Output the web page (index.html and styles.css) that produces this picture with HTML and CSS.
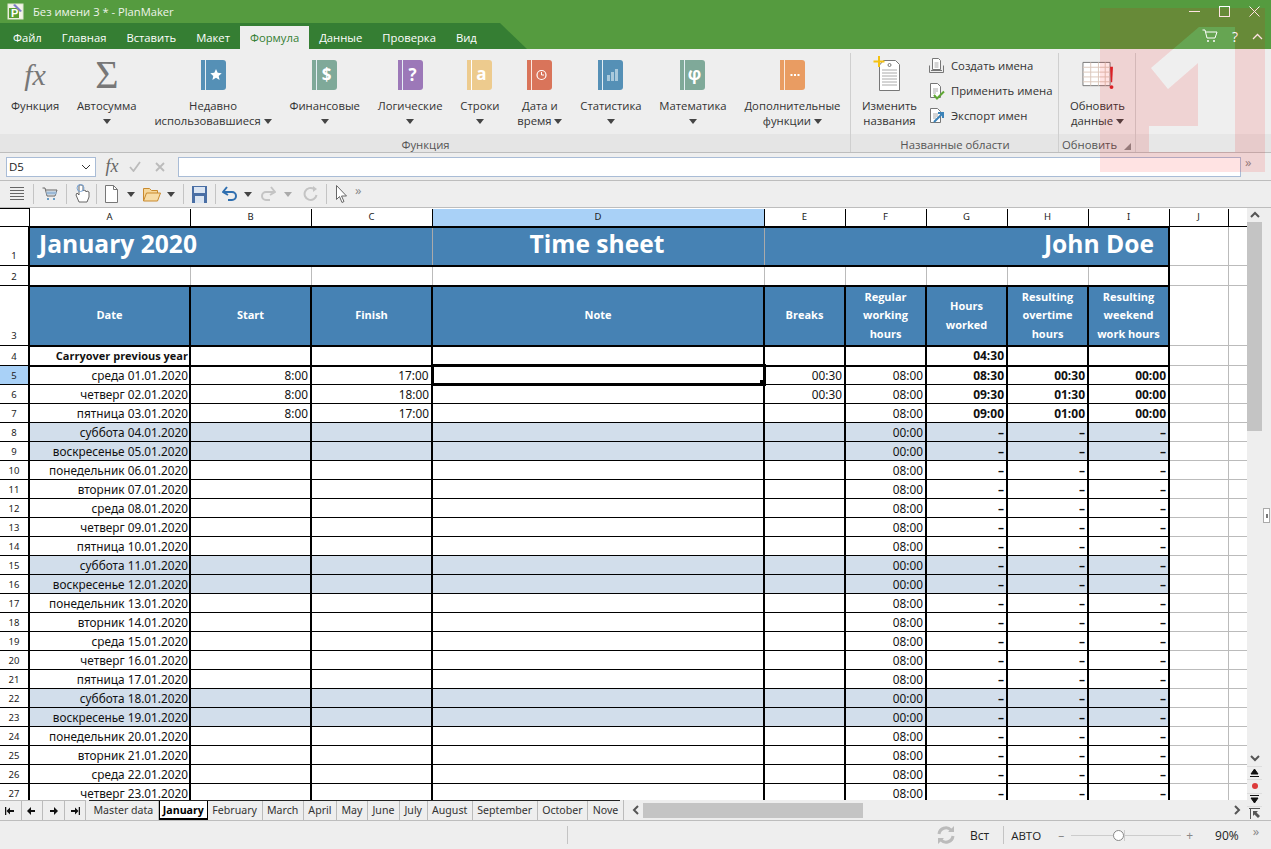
FILE: index.html
```html
<!DOCTYPE html>
<html lang="ru">
<head>
<meta charset="utf-8">
<title>Без имени 3 * - PlanMaker</title>
<link rel="stylesheet" href="styles.css">
</head>
<body>
<div class="app">
  <header class="titlebar">
    <svg class="appicon" width="17" height="17" viewBox="0 0 17 17"><rect x="1" y="1" width="15" height="15" fill="#f4f4e8" stroke="#dfe8d0"/><rect x="2" y="5" width="10" height="10" fill="#5a9e32"/><path d="M8 1l7 7-2 1-7-7z" fill="#7e7ec8"/><text x="4" y="14" class="appicon-p">P</text></svg>
    <span class="title">Без имени 3 * - PlanMaker</span>
    <div class="winctl">
      <svg width="11" height="11" viewBox="0 0 11 11"><path d="M0 5.5h11" stroke="#fff"/></svg>
      <svg width="11" height="11" viewBox="0 0 11 11"><rect x=".5" y=".5" width="10" height="10" fill="none" stroke="#fff"/></svg>
      <svg width="11" height="11" viewBox="0 0 11 11"><path d="M.5.5l10 10M10.5.5l-10 10" stroke="#fff"/></svg>
    </div>
  </header>
  <nav class="menurow">
    <div class="menutabs">
      <span class="mtab">Файл</span><span class="mtab">Главная</span><span class="mtab">Вставить</span><span class="mtab">Макет</span><span class="mtab active">Формула</span><span class="mtab">Данные</span><span class="mtab">Проверка</span><span class="mtab">Вид</span>
    </div>
    <div class="menuicons">
      <svg width="16" height="14" viewBox="0 0 16 14"><path d="M.5 1H3l2 8h8l2-6H4" fill="none" stroke="#fff"/><circle cx="6" cy="12" r="1" fill="#fff"/><circle cx="12" cy="12" r="1" fill="#fff"/></svg>
      <span class="help">?</span>
      <svg width="11" height="7" viewBox="0 0 11 7"><path d="M1 6l4.500-4.500L10 6" fill="none" stroke="#fff" stroke-width="1.300"/></svg>
    </div>
  </nav>
  <section class="ribbon">
    <div class="group g-func">
      <div class="gbody">
        <div class="rbtn"><span class="bigglyph fx">fx</span><span class="rlabel">Функция</span></div>
        <div class="rbtn"><span class="bigglyph sigma">Σ</span><span class="rlabel">Автосумма<br><i class="arrow"></i></span></div>
        <div class="rbtn">
          <svg class="book" viewBox="0 0 25 30"><path class="b-blue" d="M0 0h22a3 3 0 0 1 3 3v24a3 3 0 0 1-3 3H0z"/><rect x="4" width="1" height="30" fill="#e4eef4"/><path d="M15 9l1.700 3.800 4 .4-3 2.700.9 4-3.600-2.100-3.600 2.100.9-4-3-2.700 4-.4z" fill="#fff"/></svg>
          <span class="rlabel">Недавно<br>использовавшиеся <i class="arrow"></i></span>
        </div>
        <div class="rbtn">
          <svg class="book" viewBox="0 0 25 30"><path class="b-green" d="M0 0h22a3 3 0 0 1 3 3v24a3 3 0 0 1-3 3H0z"/><rect x="4" width="1" height="30" fill="#e4eef4"/><text x="14.500" y="21" class="bk">$</text></svg>
          <span class="rlabel">Финансовые<br><i class="arrow"></i></span>
        </div>
        <div class="rbtn">
          <svg class="book" viewBox="0 0 25 30"><path class="b-purple" d="M0 0h22a3 3 0 0 1 3 3v24a3 3 0 0 1-3 3H0z"/><rect x="4" width="1" height="30" fill="#e4eef4"/><text x="14.500" y="21" class="bk">?</text></svg>
          <span class="rlabel">Логические<br><i class="arrow"></i></span>
        </div>
        <div class="rbtn">
          <svg class="book" viewBox="0 0 25 30"><path class="b-tan" d="M0 0h22a3 3 0 0 1 3 3v24a3 3 0 0 1-3 3H0z"/><rect x="4" width="1" height="30" fill="#fff"/><text x="14.500" y="20" class="bk">a</text></svg>
          <span class="rlabel">Строки<br><i class="arrow"></i></span>
        </div>
        <div class="rbtn">
          <svg class="book" viewBox="0 0 25 30"><path class="b-red" d="M0 0h22a3 3 0 0 1 3 3v24a3 3 0 0 1-3 3H0z"/><rect x="4" width="1" height="30" fill="#fbe8e0"/><circle cx="14.500" cy="15" r="4.500" fill="none" stroke="#fff" stroke-width="1.200"/><path d="M14.500 12v3h2.500" fill="none" stroke="#fff"/></svg>
          <span class="rlabel">Дата и<br>время <i class="arrow"></i></span>
        </div>
        <div class="rbtn">
          <svg class="book" viewBox="0 0 25 30"><path class="b-blue" d="M0 0h22a3 3 0 0 1 3 3v24a3 3 0 0 1-3 3H0z"/><rect x="4" width="1" height="30" fill="#e4eef4"/><path d="M9 15h3v6H9zM13 12h3v9h-3zM17 9h3v12h-3z" fill="#a9c9dc"/></svg>
          <span class="rlabel">Статистика<br><i class="arrow"></i></span>
        </div>
        <div class="rbtn">
          <svg class="book" viewBox="0 0 25 30"><path class="b-green" d="M0 0h22a3 3 0 0 1 3 3v24a3 3 0 0 1-3 3H0z"/><rect x="4" width="1" height="30" fill="#e4eef4"/><text x="14.500" y="20" class="bk">φ</text></svg>
          <span class="rlabel">Математика<br><i class="arrow"></i></span>
        </div>
        <div class="rbtn">
          <svg class="book" viewBox="0 0 25 30"><path class="b-orange" d="M0 0h22a3 3 0 0 1 3 3v24a3 3 0 0 1-3 3H0z"/><rect x="4" width="1" height="30" fill="#fbe8da"/><path d="M10.500 14h2v2h-2zM14 14h2v2h-2zM17.500 14h2v2h-2z" fill="#fff"/></svg>
          <span class="rlabel">Дополнительные<br>функции <i class="arrow"></i></span>
        </div>
      </div>
      <div class="glabel">Функция</div>
    </div>
    <div class="group g-names">
      <div class="gbody names">
        <div class="rbtn">
          <svg class="tag" width="32" height="32" viewBox="0 0 32 32"><path d="M10.500 4.500h12l4 4v26h-20V9z" fill="#fff" stroke="#777"/><circle cx="16.500" cy="9" r="1.500" fill="none" stroke="#777"/><path d="M9 14h15M9 17h15M9 20h15M9 23h15M9 26h15M9 29h15" stroke="#aaa"/><path d="M6 0v11M.5 5.500h11" stroke="#f5c211" stroke-width="2"/></svg>
          <span class="rlabel">Изменить<br>названия</span>
        </div>
        <ul class="namelist">
          <li><svg width="17" height="17" viewBox="0 0 17 17"><path d="M4.500 1.500h6l2 2v9h-8z" fill="#fff" stroke="#777"/><path d="M6.500 6h4M6.500 8h4M6.500 10h4" stroke="#aaa"/><path d="M1.500 8.500v7h14v-7M3 13.500h11" fill="none" stroke="#777"/></svg>Создать имена</li>
          <li><svg width="17" height="18" viewBox="0 0 17 18"><path d="M2.500 1.500h7l3 3v11h-10z" fill="#fff" stroke="#777"/><path d="M5 7h5M5 9h5M5 11h3" stroke="#aaa"/><path d="M6 13l3 3.500 7-7" fill="none" stroke="#5fa832" stroke-width="2"/></svg>Применить имена</li>
          <li><svg width="17" height="18" viewBox="0 0 17 18"><path d="M2.500 1.500h7l3 3v11h-10z" fill="#fff" stroke="#777"/><path d="M5 7h5M5 9h5M5 11h3" stroke="#aaa"/><path d="M6 15l8-8M10 6h5v5" fill="none" stroke="#3b82b8" stroke-width="2"/></svg>Экспорт имен</li>
        </ul>
      </div>
      <div class="glabel">Названные области</div>
    </div>
    <div class="group g-refresh">
      <div class="gbody">
        <div class="rbtn">
          <svg width="34" height="31" viewBox="0 0 34 31"><path d="M2.500 2.500h28v24h-28z" fill="#fff" stroke="#777"/><path d="M2.500 7.500h28M2.500 12.500h28M2.500 17.500h28M2.500 22.500h28M10.500 2.500v24M18.500 2.500v24M25.500 2.500v24" stroke="#dcc8bc"/><path d="M30.500 7h3l-.8 16h-1.400z" fill="#d7232a"/><circle cx="32" cy="28" r="2" fill="#d7232a"/></svg>
          <span class="rlabel">Обновить<br>данные <i class="arrow"></i></span>
        </div>
      </div>
      <div class="glabel refresh-label">Обновить<svg width="7" height="7" viewBox="0 0 7 7"><path d="M7 0v7H0z" fill="#8a8a8a"/></svg></div>
    </div>
    <div class="group g-empty"><div class="gbody"></div><div class="glabel">&nbsp;</div></div>
  </section>
  <section class="formulabar">
    <div class="namebox"><span>D5</span><svg width="10" height="6" viewBox="0 0 10 6"><path d="M1 1l4 4 4-4" fill="none" stroke="#333"/></svg></div>
    <span class="ffx">fx</span>
    <svg class="fcheck" width="12" height="11" viewBox="0 0 12 11"><path d="M1 6l3.500 4L11 1" fill="none" stroke="#bbb" stroke-width="1.800"/></svg>
    <svg class="fcross" width="10" height="10" viewBox="0 0 10 10"><path d="M1 1l8 8M9 1L1 9" stroke="#bbb" stroke-width="1.800"/></svg>
    <div class="finput"></div>
    <span class="more">»</span>
  </section>
  <section class="toolbar">
    <svg class="t-menu" width="16" height="16" viewBox="0 0 16 16"><path d="M1 1.500h14M1 4.500h14M1 7.500h14M1 10.500h14M1 13.500h14" stroke="#666"/></svg>
    <i class="sep"></i>
    <svg width="16" height="16" viewBox="0 0 16 16"><path d="M.5 2H3l2 8h8l2-6H4" fill="none" stroke="#666"/><path d="M4.500 7h10" stroke="#9bb9d6" stroke-width="3"/><circle cx="6" cy="13" r="1" fill="#3b82b8"/><circle cx="12" cy="13" r="1" fill="#3b82b8"/></svg>
    <i class="sep"></i>
    <svg class="t-hand" width="15" height="20" viewBox="0 0 15 20"><path d="M4 1v10L2 9 1 11l3 7h8l2-5V8l-2-1-1 1V7L9 6 8 7V1.500L6 1z" fill="#fff" stroke="#666"/><circle cx="5.500" cy="4" r="3.500" fill="none" stroke="#7ba7d8"/></svg>
    <i class="sep"></i>
    <svg width="13" height="18" viewBox="0 0 13 18"><path d="M.5.500h8l4 4v13H.5z" fill="#fff" stroke="#777"/><path d="M8.500.500v4h4" fill="none" stroke="#777"/></svg>
    <i class="arrow dark a-doc"></i>
    <svg class="t-folder" width="18" height="15" viewBox="0 0 18 15"><path d="M.5 14V1.500h6l2 2h6V6" fill="#f6d79a" stroke="#c98a2e"/><path d="M.5 14l3-8h14l-3 8z" fill="#f7dca6" stroke="#c98a2e"/></svg>
    <i class="arrow dark a-folder"></i>
    <i class="sep s-tight"></i>
    <svg width="15" height="17" viewBox="0 0 15 17"><rect width="15" height="17" fill="#4a6fa5"/><rect x="2" y="1" width="11" height="6" fill="#dbe5f2"/><rect x="3" y="10" width="9" height="7" fill="#dbe5f2"/></svg>
    <i class="sep s-undo"></i>
    <svg width="15" height="17" viewBox="0 0 15 17"><path d="M1 6h9a4 4 0 0 1 0 8H6" fill="none" stroke="#2f6fb0" stroke-width="2"/><path d="M5 1L1 6l5 3" fill="none" stroke="#2f6fb0" stroke-width="2"/></svg>
    <i class="arrow dark a-undo"></i>
    <svg class="t-redo" width="15" height="17" viewBox="0 0 15 17"><path d="M14 6H5a4 4 0 0 0 0 8h4" fill="none" stroke="#c4c4c4" stroke-width="2"/><path d="M10 1l4 5-5 3" fill="none" stroke="#c4c4c4" stroke-width="2"/></svg>
    <i class="arrow lite"></i>
    <svg class="t-again" width="16" height="16" viewBox="0 0 16 16"><path d="M13.500 9A6 6 0 1 1 11 3" fill="none" stroke="#c4c4c4" stroke-width="2"/><path d="M10 0l4 3-4 3z" fill="#c4c4c4"/></svg>
    <i class="sep s-cursor"></i>
    <svg width="11" height="18" viewBox="0 0 11 18"><path d="M.5.500v14l3-3 2.500 6 2-1-2.500-5.500h5z" fill="#fff" stroke="#666"/></svg>
    <span class="more tmore">»</span>
  </section>
  <main class="workarea">
    <div class="leftpane">
      <div class="sheet">
        <table class="grid">
          <colgroup><col class="c-rh"><col class="c-a"><col class="c-b"><col class="c-b"><col class="c-d"><col class="c-e"><col class="c-e"><col class="c-e"><col class="c-e"><col class="c-e"><col class="c-j"><col class="c-k"></colgroup>
          <tr class="r-head"><th class="rh"></th><th class="ch">A</th><th class="ch">B</th><th class="ch">C</th><th class="ch on">D</th><th class="ch">E</th><th class="ch">F</th><th class="ch">G</th><th class="ch">H</th><th class="ch">I</th><th class="ch">J</th><th class="ch"></th></tr>
          <tr class="r1"><th class="rh">1</th><td colspan="3" class="big left">January 2020</td><td class="big mid">Time sheet</td><td colspan="5" class="big right">John Doe</td><td class="blank"></td><td class="blank"></td></tr>
          <tr class="r2"><th class="rh">2</th><td class="gap"></td><td class="gap"></td><td class="gap"></td><td class="gap"></td><td class="gap"></td><td class="gap"></td><td class="gap"></td><td class="gap"></td><td class="gap"></td><td class="blank"></td><td class="blank"></td></tr>
          <tr class="r3"><th class="rh">3</th><td class="hd">Date</td><td class="hd">Start</td><td class="hd">Finish</td><td class="hd">Note</td><td class="hd">Breaks</td><td class="hd">Regular<br>working<br>hours</td><td class="hd">Hours<br>worked</td><td class="hd">Resulting<br>overtime<br>hours</td><td class="hd">Resulting<br>weekend<br>work hours</td><td class="blank"></td><td class="blank"></td></tr>
          <tr class="r4"><th class="rh">4</th><td class="b carry">Carryover previous year</td><td></td><td></td><td></td><td></td><td></td><td class="b">04:30</td><td></td><td></td><td class="blank"></td><td class="blank"></td></tr>
          <tr><th class="rh on">5</th><td>среда 01.01.2020</td><td>8:00</td><td>17:00</td><td class="sel"><i class="handle"></i></td><td>00:30</td><td>08:00</td><td class="b">08:30</td><td class="b">00:30</td><td class="b">00:00</td><td class="blank"></td><td class="blank"></td></tr>
          <tr><th class="rh">6</th><td>четверг 02.01.2020</td><td>8:00</td><td>18:00</td><td></td><td>00:30</td><td>08:00</td><td class="b">09:30</td><td class="b">01:30</td><td class="b">00:00</td><td class="blank"></td><td class="blank"></td></tr>
          <tr><th class="rh">7</th><td>пятница 03.01.2020</td><td>8:00</td><td>17:00</td><td></td><td></td><td>08:00</td><td class="b">09:00</td><td class="b">01:00</td><td class="b">00:00</td><td class="blank"></td><td class="blank"></td></tr>
          <tr class="we"><th class="rh">8</th><td>суббота 04.01.2020</td><td></td><td></td><td></td><td></td><td>00:00</td><td class="b">–</td><td class="b">–</td><td class="b">–</td><td class="blank"></td><td class="blank"></td></tr>
          <tr class="we"><th class="rh">9</th><td>воскресенье 05.01.2020</td><td></td><td></td><td></td><td></td><td>00:00</td><td class="b">–</td><td class="b">–</td><td class="b">–</td><td class="blank"></td><td class="blank"></td></tr>
          <tr><th class="rh">10</th><td>понедельник 06.01.2020</td><td></td><td></td><td></td><td></td><td>08:00</td><td class="b">–</td><td class="b">–</td><td class="b">–</td><td class="blank"></td><td class="blank"></td></tr>
          <tr><th class="rh">11</th><td>вторник 07.01.2020</td><td></td><td></td><td></td><td></td><td>08:00</td><td class="b">–</td><td class="b">–</td><td class="b">–</td><td class="blank"></td><td class="blank"></td></tr>
          <tr><th class="rh">12</th><td>среда 08.01.2020</td><td></td><td></td><td></td><td></td><td>08:00</td><td class="b">–</td><td class="b">–</td><td class="b">–</td><td class="blank"></td><td class="blank"></td></tr>
          <tr><th class="rh">13</th><td>четверг 09.01.2020</td><td></td><td></td><td></td><td></td><td>08:00</td><td class="b">–</td><td class="b">–</td><td class="b">–</td><td class="blank"></td><td class="blank"></td></tr>
          <tr><th class="rh">14</th><td>пятница 10.01.2020</td><td></td><td></td><td></td><td></td><td>08:00</td><td class="b">–</td><td class="b">–</td><td class="b">–</td><td class="blank"></td><td class="blank"></td></tr>
          <tr class="we"><th class="rh">15</th><td>суббота 11.01.2020</td><td></td><td></td><td></td><td></td><td>00:00</td><td class="b">–</td><td class="b">–</td><td class="b">–</td><td class="blank"></td><td class="blank"></td></tr>
          <tr class="we"><th class="rh">16</th><td>воскресенье 12.01.2020</td><td></td><td></td><td></td><td></td><td>00:00</td><td class="b">–</td><td class="b">–</td><td class="b">–</td><td class="blank"></td><td class="blank"></td></tr>
          <tr><th class="rh">17</th><td>понедельник 13.01.2020</td><td></td><td></td><td></td><td></td><td>08:00</td><td class="b">–</td><td class="b">–</td><td class="b">–</td><td class="blank"></td><td class="blank"></td></tr>
          <tr><th class="rh">18</th><td>вторник 14.01.2020</td><td></td><td></td><td></td><td></td><td>08:00</td><td class="b">–</td><td class="b">–</td><td class="b">–</td><td class="blank"></td><td class="blank"></td></tr>
          <tr><th class="rh">19</th><td>среда 15.01.2020</td><td></td><td></td><td></td><td></td><td>08:00</td><td class="b">–</td><td class="b">–</td><td class="b">–</td><td class="blank"></td><td class="blank"></td></tr>
          <tr><th class="rh">20</th><td>четверг 16.01.2020</td><td></td><td></td><td></td><td></td><td>08:00</td><td class="b">–</td><td class="b">–</td><td class="b">–</td><td class="blank"></td><td class="blank"></td></tr>
          <tr><th class="rh">21</th><td>пятница 17.01.2020</td><td></td><td></td><td></td><td></td><td>08:00</td><td class="b">–</td><td class="b">–</td><td class="b">–</td><td class="blank"></td><td class="blank"></td></tr>
          <tr class="we"><th class="rh">22</th><td>суббота 18.01.2020</td><td></td><td></td><td></td><td></td><td>00:00</td><td class="b">–</td><td class="b">–</td><td class="b">–</td><td class="blank"></td><td class="blank"></td></tr>
          <tr class="we"><th class="rh">23</th><td>воскресенье 19.01.2020</td><td></td><td></td><td></td><td></td><td>00:00</td><td class="b">–</td><td class="b">–</td><td class="b">–</td><td class="blank"></td><td class="blank"></td></tr>
          <tr><th class="rh">24</th><td>понедельник 20.01.2020</td><td></td><td></td><td></td><td></td><td>08:00</td><td class="b">–</td><td class="b">–</td><td class="b">–</td><td class="blank"></td><td class="blank"></td></tr>
          <tr><th class="rh">25</th><td>вторник 21.01.2020</td><td></td><td></td><td></td><td></td><td>08:00</td><td class="b">–</td><td class="b">–</td><td class="b">–</td><td class="blank"></td><td class="blank"></td></tr>
          <tr><th class="rh">26</th><td>среда 22.01.2020</td><td></td><td></td><td></td><td></td><td>08:00</td><td class="b">–</td><td class="b">–</td><td class="b">–</td><td class="blank"></td><td class="blank"></td></tr>
          <tr><th class="rh">27</th><td>четверг 23.01.2020</td><td></td><td></td><td></td><td></td><td>08:00</td><td class="b">–</td><td class="b">–</td><td class="b">–</td><td class="blank"></td><td class="blank"></td></tr>
        </table>
      </div>
      <div class="sheettabs">
        <div class="navbtn"><svg width="10" height="8" viewBox="0 0 10 8"><path d="M.5 0v8" stroke="#111" stroke-width="1.500"/><path d="M1.500 4L5 .5V3h4v2H5v2.500z" fill="#111"/></svg></div>
        <div class="navbtn"><svg width="9" height="8" viewBox="0 0 9 8"><path d="M0 4l4-4v3h4v2H4v3z" fill="#111"/></svg></div>
        <div class="navbtn"><svg width="9" height="8" viewBox="0 0 9 8"><path d="M9 4L5 0v3H1v2h4v3z" fill="#111"/></svg></div>
        <div class="navbtn"><svg width="10" height="8" viewBox="0 0 10 8"><path d="M9.500 0v8" stroke="#111" stroke-width="1.500"/><path d="M8.500 4L5 .5V3H1v2h4v2.500z" fill="#111"/></svg></div>
        <div class="stabs">
          <span class="stab">Master data</span><span class="stab active">January</span><span class="stab">February</span><span class="stab">March</span><span class="stab">April</span><span class="stab">May</span><span class="stab">June</span><span class="stab">July</span><span class="stab">August</span><span class="stab">September</span><span class="stab">October</span><span class="stab last">Nove</span>
        </div>
        <div class="hscroll">
          <svg width="7" height="10" viewBox="0 0 7 10"><path d="M6 1L2 5l4 4" fill="none" stroke="#555" stroke-width="2"/></svg>
          <div class="hthumb"></div>
          <svg class="hright" width="7" height="10" viewBox="0 0 7 10"><path d="M1 1l4 4-4 4" fill="none" stroke="#555" stroke-width="2"/></svg>
        </div>
      </div>
    </div>
    <aside class="vscroll">
      <svg class="vup" width="10" height="7" viewBox="0 0 10 7"><path d="M1 6l4-4 4 4" fill="none" stroke="#555" stroke-width="2"/></svg>
      <div class="vthumb"></div>
      <div class="vspace"></div>
      <svg class="vdown" width="10" height="7" viewBox="0 0 10 7"><path d="M1 1l4 4 4-4" fill="none" stroke="#555" stroke-width="2"/></svg>
      <div class="vbtn"><svg width="9" height="9" viewBox="0 0 9 9"><path d="M0 8.500h9M4.500 1L8 6H1z" stroke="#111" fill="#111"/></svg></div>
      <div class="vbtn"><i class="reddot"></i></div>
      <div class="vbtn"><svg width="9" height="9" viewBox="0 0 9 9"><path d="M0 .5h9M4.500 8L8 3H1z" stroke="#111" fill="#111"/></svg></div>
      <div class="vbtn split"><svg width="11" height="11" viewBox="0 0 11 11"><path d="M0 .5h11M1.500 0v11" stroke="#555"/><path d="M4 3h5L7.500 4.500 11 8 9 10 5.500 6.500 4 8z" fill="#555"/></svg></div>
    </aside>
    <div class="edge"><div class="grip"><i></i></div></div>
  </main>
  <footer class="status">
    <i class="st-sep first"></i>
    <svg class="st-sync" width="18" height="18" viewBox="0 0 18 18"><path d="M2 8a7 7 0 0 1 12-4M16 10a7 7 0 0 1-12 4" fill="none" stroke="#bbb" stroke-width="3"/><path d="M11 6h6V0zM7 12H1v6z" fill="#bbb"/></svg>
    <span class="st-ins">Вст</span>
    <i class="st-sep"></i>
    <span class="st-auto">АВТО</span>
    <span class="st-minus">–</span>
    <div class="slider"><i class="tick"></i><i class="knob"></i></div>
    <span class="st-plus">+</span>
    <span class="st-zoom">90%</span>
    <span class="more st-more">»</span>
  </footer>
  <svg class="watermark" width="165" height="164" viewBox="0 0 165 164"><path class="wm-red" fill-rule="evenodd" d="M0 0h165v164H0zM135 19H99L51 60l17 21 30-26v63H49v26h86z"/><path class="wm-white" d="M135 19H99L51 60l17 21 30-26v63H49v26h86z"/></svg>
</div>
</body>
</html>
```

FILE: styles.css
```css
* { box-sizing: border-box; }
html, body { margin: 0; height: 100%; overflow: hidden; }
body { font-family: "Open Sans", "Noto Sans", "Liberation Sans", sans-serif; font-size: 11.3px; color: #333; background: #eee; }
.app { position: relative; display: flex; flex-direction: column; height: 849px; width: 1271px; overflow: hidden; }

.titlebar { height: 23px; background: #559b3f; display: flex; align-items: center; padding-left: 7px; color: #eef4ea; flex: none; }
.appicon { flex: none; }
.appicon-p { font: bold 11px "Liberation Sans", sans-serif; fill: #fff; }
.title { margin-left: 9px; font-size: 11.2px; }
.winctl { margin-left: auto; display: flex; gap: 19px; padding-right: 11px; }

.menurow { height: 26px; background: #559b3f; display: flex; flex: none; }
.menutabs { width: 527px; background: #357e33; clip-path: polygon(0 0, 500px 0, 527px 100%, 0 100%); display: flex; padding-left: 3px; align-items: flex-end; }
.mtab { height: 23px; line-height: 23px; padding: 0 10px; color: #fff; font-size: 11.25px; }
.mtab.active { background: #eee; color: #357e33; }
.menuicons { margin-left: auto; display: flex; align-items: center; gap: 14px; padding-right: 8px; }
.help { color: #fff; font-size: 14px; }

.ribbon { display: flex; height: 104px; flex: none; border-bottom: 1px solid #bdbdbd; background: #eee; }
.group { display: flex; flex-direction: column; flex: none; position: relative; }
.g-func { width: 851px; }
.g-names { width: 208px; }
.g-refresh { width: 77px; }
.g-empty { flex: 1; }
.group:not(.g-empty)::after { content: ""; position: absolute; right: 0; top: 4px; bottom: 0; width: 1px; background: #cfcfcf; }
.gbody { flex: 1; display: flex; gap: 17.8px; padding-left: 11px; }
.glabel { height: 18px; line-height: 21px; background: #e5e5e5; text-align: center; color: #555; font-size: 11.3px; }
.refresh-label { display: flex; justify-content: space-between; padding: 0 5px 0 3px; }
.refresh-label svg { align-self: flex-end; margin-bottom: 2px; }
.rbtn { display: flex; flex-direction: column; align-items: center; padding-top: 11px; }
.rbtn > svg { height: 30px; display: block; flex: none; overflow: visible; }
.rbtn .book { width: 25px; }
.rbtn .tag { width: 32px; height: 32px; margin-top: -4px; margin-bottom: 2px; }
.bigglyph { height: 30px; line-height: 30px; color: #777; font-family: "Liberation Serif", serif; display: block; }
.fx { font-size: 30px; font-style: italic; }
.sigma { font-size: 40px; }
.rlabel { margin-top: 8px; text-align: center; line-height: 15px; white-space: nowrap; color: #333; }
.arrow { display: inline-block; width: 0; height: 0; border-style: solid; border-width: 5px 4px 0; border-color: #444 transparent transparent; vertical-align: 1px; }
.b-blue { fill: #5590b6; }
.b-green { fill: #7fa999; }
.b-purple { fill: #9c78b8; }
.b-tan { fill: #edcb8e; }
.b-red { fill: #d9745a; }
.b-orange { fill: #e99c62; }
.bk { font: bold 17px "Open Sans", sans-serif; fill: #fff; text-anchor: middle; }
.names { gap: 11px; }
.namelist { list-style: none; margin: 0; padding: 4px 0 0; display: flex; flex-direction: column; }
.namelist li { height: 25px; display: flex; align-items: center; gap: 6px; white-space: nowrap; }
.namelist svg { flex: none; }
.g-refresh .gbody { justify-content: center; padding-left: 0; }

.formulabar { height: 28px; display: flex; align-items: center; flex: none; padding-left: 6px; border-bottom: 1px solid #bdbdbd; background: #eee; }
.namebox { width: 90px; height: 20px; background: #fff; border: 1px solid #a9bcd6; display: flex; align-items: center; justify-content: space-between; padding: 0 4px 0 2px; font-size: 11.5px; color: #222; }
.ffx { width: 32px; text-align: center; font: italic 18px "Liberation Serif", serif; color: #666; }
.fcheck { margin-left: 1px; }
.fcross { margin-left: 14px; }
.finput { width: 1063px; height: 20px; background: #fff; border: 1px solid #a9bcd6; margin-left: 13px; }
.more { color: #888; font-size: 13px; line-height: 1; }
.formulabar .more { margin-left: 4px; margin-top: -8px; }

.toolbar { height: 27px; display: flex; align-items: center; flex: none; padding-left: 9px; background: #eee; border-bottom: 1px solid #bdbdbd; }
.sep { width: 1px; height: 20px; background: #c4c4c4; margin: 0 8px; flex: none; }
.t-hand { margin-right: -2px; }
.s-tight { margin-left: 0; }
.s-undo { margin-right: 6px; }
.s-cursor { margin-left: 7px; margin-right: 9px; }
.arrow.dark { flex: none; vertical-align: 0; }
.a-doc { margin: 0 8px 0 9px; }
.a-folder { margin: 0 8px 0 6px; }
.a-undo { margin: 0 9px 0 7px; }
.arrow.lite { border-top-color: #aaa; margin: 0 11px 0 8px; flex: none; }
.tmore { margin: -8px 0 0 8px; }

.workarea { height: 613px; display: flex; flex: none; }
.leftpane { width: 1247px; display: flex; flex-direction: column; flex: none; }
.sheet { height: 592px; overflow: hidden; background: #fff; flex: none; }
.grid { border-collapse: collapse; table-layout: fixed; width: 1247px; font-family: "Noto Sans", "Open Sans", sans-serif; font-size: 11.8px; color: #111; }
.c-rh { width: 29px; } .c-a { width: 161px; } .c-b { width: 121px; } .c-d { width: 332px; } .c-e { width: 81px; } .c-j { width: 59px; } .c-k { width: 19px; }
.grid tr { height: 19px; }
.grid td { border: 1px solid #000; border-left-width: 2px; border-right-width: 2px; padding: 0 2px 0 0; text-align: right; white-space: nowrap; line-height: 17px; overflow: hidden; }
.grid td:nth-child(2) { padding-right: 1px; }
.grid th { font-weight: 400; padding: 0; }
.grid tr.r-head { height: 18px; }
.ch { border: 1px solid #000; border-top: 0; background: #fff; font-size: 9.500px; color: #222; line-height: 16px; }
.ch.on { background: #a9d1f7; }
.rh { border: 1px solid #000; border-left: 0; background: #fff; font-size: 9.500px; color: #222; vertical-align: bottom; line-height: 17px; }
.rh.on { background: #a9d1f7; }
.grid tr.r1 { height: 39px; }
.grid tr.r2 { height: 20px; }
.grid tr.r3 { height: 60px; }
.grid tr.r4 { height: 20px; }
.grid .r1 .rh, .grid .r3 .rh { padding-bottom: 1px; }
.grid td.big { background: #4682b4; color: #fff; font: 700 24.6px/32px "Open Sans", sans-serif; border-width: 2px; vertical-align: top; padding-top: 0; }
.grid td.left { text-align: left; padding-left: 9px; border-right: 1px solid #aaa; }
.grid td.mid { text-align: center; border-left: 1px solid #aaa; border-right: 1px solid #aaa; }
.grid td.right { text-align: right; padding-right: 14px; border-left: 1px solid #aaa; }
.grid td.gap { border-left: 1px solid #bbb; border-right: 1px solid #bbb; border-top-width: 2px; border-bottom-width: 2px; }
.grid td.gap:nth-child(2) { border-left: 2px solid #000; }
.grid td.gap:nth-child(10) { border-right: 2px solid #000; }
.grid td.hd { background: #4682b4; color: #fff; font: 700 11px/18.500px "Open Sans", sans-serif; text-align: center; padding: 0; border-width: 2px; }
.r4 td { border-top-width: 2px; border-bottom-width: 2px; line-height: 15px; padding-bottom: 1px; }
.grid td.b { font-weight: 700; font-family: "Open Sans", sans-serif; font-size: 12px; }
.grid td.carry { font-size: 11px; }
.grid td.blank { border: 1px solid #bbb; }
.we td { background: #d2deeb; }
.grid .we td.blank { background: #fff; }
.grid td.sel { border: 3px solid #000; position: relative; overflow: visible; }
.handle { position: absolute; right: -3px; bottom: -3px; width: 6px; height: 6px; background: #000; }

.sheettabs { height: 21px; display: flex; background: #eee; flex: none; border-bottom: 1px solid #bdbdbd; font-size: 11px; }
.navbtn { width: 21.500px; display: flex; align-items: center; justify-content: center; border-right: 1px solid #bbb; border-top: 1px solid #bbb; flex: none; }
.stabs { display: flex; border-top: 1px solid #222; margin-left: 3px; width: 531px; flex: none; white-space: nowrap; }
.stab { padding: 0 4.500px; line-height: 19px; border-right: 1px solid #bbb; color: #333; font-family: "Noto Sans", sans-serif; font-size: 10.600px; }
.stab.active { background: #fff; color: #000; font-weight: 700; padding: 0 3px; border: 1px solid #000; border-top: 0; border-bottom-width: 2px; height: 19px; line-height: 18px; font-family: "Open Sans", sans-serif; }
.stab.last { border-right: 0; }
.hscroll { flex: 1; display: flex; align-items: center; padding-left: 8px; border-left: 1px solid #bbb; margin-left: 3px; }
.hthumb { width: 220px; height: 15px; background: #c4c4c4; margin-left: 4px; }
.hright { margin-left: auto; margin-right: 6px; }

.vscroll { width: 15px; flex: none; display: flex; flex-direction: column; align-items: center; background: #eee; border-bottom: 1px solid #bdbdbd; }
.vup { margin: 3px 0 4px; flex: none; }
.vthumb { width: 15px; height: 209px; background: #c4c4c4; flex: none; }
.vspace { flex: 1; }
.vdown { flex: none; margin-bottom: 4px; }
.vbtn { width: 15px; height: 13.500px; display: flex; align-items: center; justify-content: center; border-top: 1px solid #ddd; flex: none; }
.vbtn.split { height: 14px; }
.reddot { width: 6px; height: 6px; background: #dd3b3b; border-radius: 50%; }
.edge { flex: 1; background: #eee; display: flex; align-items: flex-start; padding-top: 300px; border-bottom: 1px solid #bdbdbd; }
.grip { width: 7px; height: 15px; margin-left: 1px; border: 1px solid #aaa; background: #fff; display: flex; align-items: center; justify-content: center; }
.grip i { width: 2px; height: 4px; background: #777; }

.status { flex: none; height: 28px; display: flex; align-items: center; background: #eee; padding-left: 567px; color: #222; font-size: 12px; }
.st-sep { width: 1px; height: 18px; background: #c4c4c4; flex: none; }
.st-sync { margin-left: 369px; }
.st-ins { margin-left: 15px; margin-right: 14px; }
.st-auto { margin-left: 7px; font-size: 11.500px; }
.st-minus { margin-left: 17px; color: #888; }
.slider { position: relative; width: 110px; height: 1px; background: #ccc; margin-left: 7px; }
.tick { position: absolute; left: 53px; top: -5px; width: 1px; height: 11px; background: #ccc; }
.knob { position: absolute; left: 42px; top: -5px; width: 11px; height: 11px; border-radius: 50%; background: #fff; border: 1px solid #888; }
.st-plus { margin-left: 5px; color: #888; }
.st-zoom { margin-left: 22px; }
.st-more { margin: -8px 0 0 14px; }

.watermark { position: absolute; left: 1100px; top: 8px; pointer-events: none; }
.wm-red { fill: rgba(255, 0, 0, .11); }
.wm-white { fill: rgba(255, 255, 255, .1); }
```
